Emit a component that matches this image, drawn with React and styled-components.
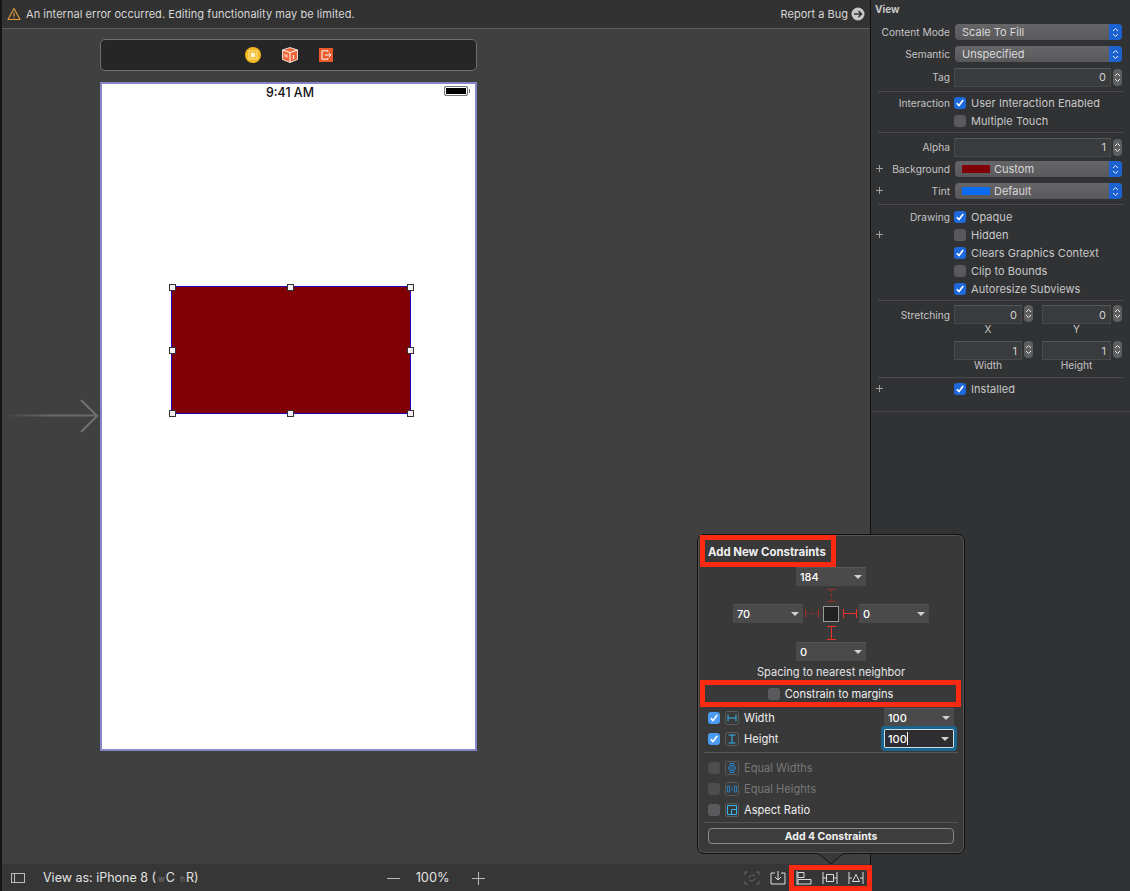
import React from "react";
import styled, { createGlobalStyle } from "styled-components";

const GlobalStyle = createGlobalStyle`
  html, body {
    margin: 0;
    width: 1130px;
    height: 891px;
    overflow: hidden;
    background: #404040;
    font-family: Inter, "Liberation Sans", sans-serif;
    font-size: 11px;
  }
  * { box-sizing: border-box; }
`;

const RED = "#fc2a12";

const Page = styled.div`
  position: relative;
  display: grid;
  grid-template-columns: 870px 260px;
  width: 1130px;
  height: 891px;
`;

/* ---------- left side ---------- */

const Main = styled.div`
  display: flex;
  flex-direction: column;
  height: 891px;
  border-left: 2px solid #151515;
`;

const Banner = styled.div`
  display: flex;
  align-items: center;
  flex: 0 0 29px;
  padding: 0 5px 1px 5px;
  background: #323232;
  border-bottom: 1px solid #5f5f5f;
  color: #d6d6d6;
`;

const BannerText = styled.span`
  margin-left: 5px;
  letter-spacing: 0.05px;
`;

const ReportBug = styled.span`
  display: flex;
  align-items: center;
  gap: 3px;
  margin-left: auto;
`;

const Canvas = styled.div`
  position: relative;
  flex: 1;
  display: flex;
  flex-direction: column;
  gap: 11px;
  padding: 10px 0 0 98px;
  background: #404040;
`;

const SceneDock = styled.div`
  display: flex;
  align-items: center;
  justify-content: center;
  gap: 21px;
  width: 377px;
  height: 32px;
  background: #262626;
  border: 1px solid #6e6e6e;
  border-radius: 5px;
`;

const Phone = styled.div`
  position: relative;
  width: 377px;
  height: 669px;
  background: #fff;
  border: 2px solid #8585c8;
`;

const StatusBar = styled.div`
  position: relative;
  display: flex;
  justify-content: center;
  padding: 1px 0 0 3px;
  color: #111;
  font-size: 12.4px;
  font-weight: 500;
  line-height: 16px;
`;

const Battery = styled.div`
  position: absolute;
  top: 2px;
  right: 7px;
  width: 24px;
  height: 10px;
  background: #000;
  border: 1px solid #777;
  border-radius: 2px;
  box-shadow: inset 0 0 0 1px #fff;

  &::after {
    content: "";
    position: absolute;
    right: -3px;
    top: 2px;
    width: 1px;
    height: 4px;
    background: #777;
  }
`;

const RedView = styled.div`
  position: absolute;
  left: 69px;
  top: 202px;
  width: 240px;
  height: 128px;
  background: #800005;
  border: 1px solid #2400c4;
`;

const Handle = styled.span`
  position: absolute;
  left: calc(${(p) => p.$x}% - 3.5px);
  top: calc(${(p) => p.$y}% - 3.5px);
  width: 7px;
  height: 7px;
  background: #f4eef4;
  border: 1px solid #333;
`;

const SegueArrow = styled.svg`
  position: absolute;
  left: 0;
  top: 370px;
`;

const BottomBar = styled.div`
  display: flex;
  align-items: center;
  flex: 0 0 27px;
  padding-left: 9px;
  background: #363636;
  color: #e2e2e2;
  font-size: 12.5px;
`;

const ViewAs = styled.span`
  margin-left: 18px;
  white-space: nowrap;
`;

const SizeClass = styled.span`
  color: #7d7d7d;
  font-size: 8px;
  margin: 0 1px 0 2px;
`;

const ZoomGroup = styled.div`
  display: flex;
  align-items: center;
  margin-left: 188px;
  gap: 16px;
`;

const ZoomLabel = styled.span`
  margin-right: 6px;
  font-size: 12.8px;
`;

const BarIcons = styled.div`
  display: flex;
  align-items: center;
  gap: 10px;
  margin-left: auto;
`;

const RedFrame = styled.div`
  display: flex;
  align-items: center;
  gap: 10px;
  position: relative;
  z-index: 3;
  height: 26px;
  margin: 1px -2px 0 -7px;
  padding: 0 3px 0 2px;
  border: 5px solid ${RED};
  background: #363636;
`;

/* ---------- inspector ---------- */

const Inspector = styled.aside`
  background: #313234;
  border-left: 1px solid #111;
  color: #d0d0d0;
`;

const Title = styled.div`
  height: 20px;
  padding: 3px 0 0 4px;
  color: #c8c8c8;
  font-size: 10px;
  font-weight: 700;
  line-height: 12px;
`;

const Section = styled.div`
  padding: ${(p) => p.$pad || "2px 0"};
  margin: 0 7px;
  border-bottom: 1px solid #4a4a4c;
  ${(p) => p.$flush && "margin: 0; padding-left: 7px; padding-right: 7px; border-bottom-color: #454547;"}
`;

const Row = styled.div`
  position: relative;
  display: flex;
  align-items: center;
  height: ${(p) => p.$h || 18}px;
  padding-left: 76px;
`;

const Label = styled.span`
  position: absolute;
  left: -7px;
  width: 79px;
  text-align: right;
  color: #c4c4c4;
  font-size: 10.2px;
  white-space: nowrap;
`;

const StretchLabel = styled(Label)`
  top: 4px;
`;

const Plus = styled.span`
  position: absolute;
  left: -2px;
  top: 50%;
  width: 7px;
  height: 7px;
  margin-top: -4px;
  background:
    linear-gradient(#a0a0a0, #a0a0a0) center / 7px 1px no-repeat,
    linear-gradient(#a0a0a0, #a0a0a0) center / 1px 7px no-repeat;
`;

const Select = styled.div`
  display: flex;
  align-items: center;
  width: 167px;
  height: 16px;
  margin-left: 1px;
  padding-left: 7px;
  background: linear-gradient(#666668, #59595b);
  border-radius: 4px;
  color: #d8d8d8;
  font-size: 11px;
  overflow: hidden;
`;

const Swatch = styled.span`
  width: 28px;
  height: 8px;
  margin-right: 4px;
  background: ${(p) => p.$color};
`;

const SelectArrows = styled.span`
  display: flex;
  align-items: center;
  justify-content: center;
  width: 13px;
  height: 16px;
  margin-left: auto;
  background: #1c62d0;
`;

const Field = styled.div`
  display: flex;
  align-items: center;
  justify-content: flex-end;
  width: ${(p) => p.$w}px;
  height: 19px;
  padding-right: 4px;
  background: #3a3b3d;
  border: 1px solid #48494b;
  border-top-color: #565759;
  color: #d0d0d0;
  font-size: 11px;
`;

const Stepper = styled.span`
  display: flex;
  align-items: center;
  justify-content: center;
  width: 9px;
  height: 17px;
  margin-left: 2px;
  background: #5e5f61;
  border-radius: 4px;
`;

const Check = styled.span`
  display: flex;
  align-items: center;
  justify-content: center;
  flex: none;
  width: 12px;
  height: 12px;
  border-radius: 3px;
  background: ${(p) => (p.$on ? p.$blue || "#1d69dc" : p.$bg || "#5a5a5c")};
`;

const CheckLabel = styled.span`
  margin-left: 5px;
  color: #c8c8c8;
  font-size: 11px;
  letter-spacing: 0.05px;
  white-space: nowrap;
`;

const StretchGrid = styled.div`
  position: relative;
  display: grid;
  grid-template-columns: 88px 80px;
  padding-left: 76px;
`;

const StretchCell = styled.div`
  display: grid;
  grid-template-columns: auto auto;
  grid-template-rows: 19px 10px;
  justify-content: start;
  height: 36px;
`;

const StretchCaption = styled.span`
  grid-column: 1;
  text-align: center;
  color: #c4c4c4;
  font-size: 10.2px;
  line-height: 10px;
`;

/* ---------- popover ---------- */

const Popover = styled.div`
  position: absolute;
  left: 697px;
  top: 534px;
  z-index: 2;
  display: flex;
  flex-direction: column;
  width: 268px;
  height: 320px;
  padding: 0 2px;
  background: #39393a;
  border: 1px solid #111;
  border-radius: 7px;
  box-shadow: inset 0 0 0 1px #555;
  color: #f0f0f0;
  font-size: 11.1px;
`;

const PopoverTail = styled.svg`
  position: absolute;
  left: 113px;
  bottom: -11px;
`;

const TitleFrame = styled.div`
  align-self: flex-start;
  width: 136px;
  height: 32px;
  padding-left: 3px;
  border: 5px solid ${RED};
  font-size: 11.4px;
  font-weight: 700;
  line-height: 24px;
  white-space: nowrap;
`;

const Diagram = styled.div`
  display: flex;
  flex-direction: column;
  align-items: center;
`;

const DropDown = styled.div`
  position: relative;
  display: flex;
  align-items: center;
  width: 70px;
  height: 19px;
  padding-left: 4px;
  background: #4a4a4b;
  border-top: 1px solid #555;
  color: #fff;
  font-size: 11px;
  font-weight: 500;

  &::after {
    content: "";
    position: absolute;
    right: 4px;
    top: 7px;
    border: 4px solid transparent;
    border-top: 4px solid #d0d0d0;
    border-bottom: 0;
  }
`;

const FocusDropDown = styled(DropDown)`
  background: #2e2e30;
  border: 1px solid #cfe0ea;
  outline: 3px solid #1b6690;
  border-radius: 1px;
  padding-left: 3px;
`;

const Caret = styled.span`
  display: inline-block;
  width: 1px;
  height: 13px;
  background: #fff;
`;

const MiddleRow = styled.div`
  display: flex;
  align-items: center;
  height: 19px;
`;

const CenterSquare = styled.div`
  width: 16px;
  height: 16px;
  margin: 0 2px;
  background: #212121;
  border: 1px solid #999;
`;

const SpacingNote = styled.div`
  margin-top: 5px;
  text-align: center;
  color: #e4e4e4;
  line-height: 13px;
`;

const MarginsFrame = styled.div`
  display: flex;
  align-items: center;
  justify-content: center;
  gap: 5px;
  width: 261px;
  height: 27px;
  margin-top: 1px;
  border: 5px solid ${RED};
`;

const OptionRow = styled.div`
  display: flex;
  align-items: center;
  height: 21px;
  padding-left: 8px;
  color: ${(p) => (p.$dim ? "#777" : "#f0f0f0")};
`;

const ConstraintIcon = styled.span`
  display: flex;
  margin: 0 5px;
`;

const OptionValue = styled.div`
  margin-left: auto;
  margin-right: 8px;
`;

const PopDivider = styled.div`
  height: 1px;
  margin: ${(p) => p.$m || "0"};
  background: #555;
`;

const AddButton = styled.button`
  display: block;
  width: 246px;
  height: 16px;
  margin: 5px 0 0 8px;
  padding: 0;
  background: #3d3d3e;
  border: 1px solid #8a8a8a;
  border-radius: 4px;
  color: #f2f2f2;
  font: 700 10.5px Inter, "Liberation Sans", sans-serif;
`;

/* ---------- small drawings ---------- */

const Updown = () => (
  <svg width="7" height="11" viewBox="0 0 7 11" fill="none" stroke="#e8e8e8" strokeWidth="1">
    <path d="M1 4l2.5-2.5L6 4M1 7l2.5 2.5L6 7" />
  </svg>
);

const Tick = () => (
  <svg width="10" height="10" viewBox="0 0 10 10" fill="none" stroke="#fff" strokeWidth="1.6">
    <path d="M1.8 5.2l2.2 2.4 4.2-5.6" />
  </svg>
);

const Box = ({ on, blue, bg }) => (
  <Check $on={on} $blue={blue} $bg={bg}>
    {on && <Tick />}
  </Check>
);

const CheckRow = ({ on, plus, label, children }) => (
  <Row>
    {plus && <Plus />}
    {label && <Label>{label}</Label>}
    <Box on={on} />
    <CheckLabel>{children}</CheckLabel>
  </Row>
);

const NumberField = ({ w = 157, value }) => (
  <>
    <Field $w={w}>{value}</Field>
    <Stepper>
      <Updown />
    </Stepper>
  </>
);

const Warning = () => (
  <svg width="14" height="14" viewBox="0 0 14 14" fill="none" stroke="#e5a13a" strokeWidth="1.1">
    <path d="M7 1.5L13 12.5H1z" strokeLinejoin="round" />
    <path d="M7 5.5v4M7 10.4v1" />
  </svg>
);

const ArrowCircle = () => (
  <svg width="14" height="14" viewBox="0 0 14 14">
    <circle cx="7" cy="7" r="6.5" fill="#c8c8c8" />
    <path d="M3 7h7M7.5 4l3 3-3 3" fill="none" stroke="#323232" strokeWidth="1.5" />
  </svg>
);

const ControllerIcon = () => (
  <svg width="16" height="16" viewBox="0 0 16 16">
    <circle cx="8" cy="8" r="8" fill="#f3b81f" />
    <rect x="4" y="4" width="8" height="8" fill="none" stroke="#fbe39a" strokeWidth="1" />
    <rect x="5.8" y="5.8" width="4.4" height="4.4" fill="#fff4cf" />
  </svg>
);

const CubeIcon = () => (
  <svg width="16" height="16" viewBox="0 0 16 16">
    <path d="M8 0.5l7.5 2.5v9.5L8 15.5 0.5 12.5V3z" fill="#f0683a" />
    <path d="M0.5 3L8 5.5 15.5 3M8 5.5v10" fill="none" stroke="#fff" strokeWidth="1" />
    <path d="M0.5 3L8 0.5 15.5 3v9.5L8 15.5 0.5 12.5z" fill="none" stroke="#fff" strokeWidth="0.8" />
    <path d="M3 7v3M5 7.5v3M11.5 8v4" stroke="#fff" strokeWidth="0.9" />
  </svg>
);

const ExitIcon = () => (
  <svg width="14" height="14" viewBox="0 0 14 14">
    <rect width="14" height="14" fill="#ea5a2a" />
    <path d="M9 4V2.8H3v8.4h6V10" fill="none" stroke="#fff" strokeWidth="1" />
    <path d="M6 7h6M10 5l2 2-2 2" fill="none" stroke="#fff" strokeWidth="1" />
  </svg>
);

const HStrut = ({ dashed, w = 18 }) => (
  <svg width={w} height="13" viewBox={`0 0 ${w} 13`} stroke={dashed ? "#96302a" : "#f0302a"} strokeWidth="1">
    <path d={`M2.5 2v9M${w - 2.5} 2v9`} />
    <path d={`M3 6.5H${w - 3}`} strokeDasharray={dashed ? "3 2" : undefined} />
  </svg>
);

const VStrut = ({ dashed, h = 18 }) => (
  <svg width="14" height={h} viewBox={`0 0 14 ${h}`} stroke={dashed ? "#96302a" : "#f0302a"} strokeWidth="1">
    <path d={`M3 3.5h9M3 ${h - 2.5}h9`} />
    <path d={`M7.5 3V${h - 3}`} strokeDasharray={dashed ? "3 2" : undefined} />
  </svg>
);

const IconFrame = ({ children, color = "#35b6f0" }) => (
  <svg width="14" height="14" viewBox="0 0 14 14" fill="none" stroke={color} strokeWidth="1">
    <rect x="0.5" y="0.5" width="13" height="13" rx="2" stroke="#5b5b5b" />
    {children}
  </svg>
);

const BarIcon = ({ children, color = "#dcdcdc", w = 16 }) => (
  <svg width={w} height="16" viewBox={`0 0 ${w} 16`} fill="none" stroke={color} strokeWidth="1">
    {children}
  </svg>
);

const handles = [
  [0, 0],
  [49.8, 0],
  [100, 0],
  [0, 50],
  [100, 50],
  [0, 100],
  [49.8, 100],
  [100, 100],
];

export default function App() {
  return (
    <Page>
      <GlobalStyle />
      <Main>
        <Banner>
          <Warning />
          <BannerText>An internal error occurred. Editing functionality may be limited.</BannerText>
          <ReportBug>
            Report a Bug
            <ArrowCircle />
          </ReportBug>
        </Banner>

        <Canvas>
          <SegueArrow width="98" height="34" viewBox="0 0 98 34" fill="none">
            <defs>
              <linearGradient id="segue" x1="0" x2="1" y1="0" y2="0">
                <stop offset="0" stopColor="#666" stopOpacity="0" />
                <stop offset="0.5" stopColor="#6a6a6a" />
              </linearGradient>
            </defs>
            <rect x="0" y="15.5" width="96" height="2" fill="url(#segue)" />
            <path d="M79 1l16 16-16 16" stroke="#707070" strokeWidth="2" />
          </SegueArrow>
          <SceneDock>
            <ControllerIcon />
            <CubeIcon />
            <ExitIcon />
          </SceneDock>
          <Phone>
            <StatusBar>
              9:41 AM
              <Battery />
            </StatusBar>
            <RedView>
              {handles.map(([x, y]) => (
                <Handle key={`${x}-${y}`} $x={x} $y={y} />
              ))}
            </RedView>
          </Phone>
        </Canvas>

        <BottomBar>
          <BarIcon w="14">
            <rect x="0.5" y="3.5" width="13" height="9" stroke="#bbb" />
            <path d="M3.5 3.5v9" stroke="#bbb" />
          </BarIcon>
          <ViewAs>
            View as: iPhone 8 (<SizeClass>w</SizeClass>C <SizeClass>h</SizeClass>R)
          </ViewAs>
          <ZoomGroup>
            <BarIcon w="13">
              <path d="M0 8.5h13" stroke="#bbb" />
            </BarIcon>
            <ZoomLabel>100%</ZoomLabel>
            <BarIcon w="13">
              <path d="M0 8.5h13M6.5 2v13" stroke="#bbb" />
            </BarIcon>
          </ZoomGroup>
          <BarIcons>
            <BarIcon color="#666">
              <path d="M1 5V2h3M12 2h3v3M15 11v3h-3M4 14H1v-3" />
              <path d="M11 6a3.5 3.5 0 0 0-6 2M5 10a3.5 3.5 0 0 0 6-2" />
            </BarIcon>
            <BarIcon>
              <path d="M5 3H1v11h14V3h-4" />
              <path d="M8 1v9M5 7l3 3 3-3" />
            </BarIcon>
            <RedFrame>
              <BarIcon>
                <path d="M1 1v14M2 2.5h6v5H2zM2 9.5h13v4.5H2z" />
              </BarIcon>
              <BarIcon>
                <path d="M1 2v12M15 2v12M1 8h3M12 8h3M4.5 4.5h7v7h-7z" />
              </BarIcon>
              <BarIcon>
                <path d="M1 2v12M15 2v12M1 8h3M12 8h3M8 4.5l3.5 7h-7z" />
              </BarIcon>
            </RedFrame>
          </BarIcons>
        </BottomBar>
      </Main>

      <Inspector>
        <Title>View</Title>
        <Section $pad="1px 0 2px">
          <Row $h={22}>
            <Label>Content Mode</Label>
            <Select>
              Scale To Fill
              <SelectArrows>
                <Updown />
              </SelectArrows>
            </Select>
          </Row>
          <Row $h={22}>
            <Label>Semantic</Label>
            <Select>
              Unspecified
              <SelectArrows>
                <Updown />
              </SelectArrows>
            </Select>
          </Row>
          <Row $h={24}>
            <Label>Tag</Label>
            <NumberField value="0" />
          </Row>
        </Section>
        <Section>
          <CheckRow on label="Interaction">
            User Interaction Enabled
          </CheckRow>
          <CheckRow>Multiple Touch</CheckRow>
        </Section>
        <Section $pad="3px 0 2px">
          <Row $h={22}>
            <Label>Alpha</Label>
            <NumberField value="1" />
          </Row>
          <Row $h={22}>
            <Plus />
            <Label>Background</Label>
            <Select>
              <Swatch $color="#800005" />
              Custom
              <SelectArrows>
                <Updown />
              </SelectArrows>
            </Select>
          </Row>
          <Row $h={22}>
            <Plus />
            <Label>Tint</Label>
            <Select>
              <Swatch $color="#0a6df0" />
              Default
              <SelectArrows>
                <Updown />
              </SelectArrows>
            </Select>
          </Row>
        </Section>
        <Section $pad="3px 0 2px">
          <CheckRow on label="Drawing">
            Opaque
          </CheckRow>
          <CheckRow plus>Hidden</CheckRow>
          <CheckRow on>Clears Graphics Context</CheckRow>
          <CheckRow>Clip to Bounds</CheckRow>
          <CheckRow on>Autoresize Subviews</CheckRow>
        </Section>
        <Section $pad="4px 0 0">
          <StretchGrid>
            <StretchLabel>Stretching</StretchLabel>
            <StretchCell>
              <NumberField w={68} value="0" />
              <StretchCaption>X</StretchCaption>
            </StretchCell>
            <StretchCell>
              <NumberField w={69} value="0" />
              <StretchCaption>Y</StretchCaption>
            </StretchCell>
            <StretchCell>
              <NumberField w={68} value="1" />
              <StretchCaption>Width</StretchCaption>
            </StretchCell>
            <StretchCell>
              <NumberField w={69} value="1" />
              <StretchCaption>Height</StretchCaption>
            </StretchCell>
          </StretchGrid>
        </Section>
        <Section $pad="2px 0 13px" $flush>
          <CheckRow on plus>
            Installed
          </CheckRow>
        </Section>
      </Inspector>

      <Popover>
        <TitleFrame>Add New Constraints</TitleFrame>
        <Diagram>
          <DropDown>184</DropDown>
          <VStrut dashed />
          <MiddleRow>
            <DropDown>70</DropDown>
            <HStrut dashed />
            <CenterSquare />
            <HStrut />
            <DropDown>0</DropDown>
          </MiddleRow>
          <VStrut h={19} />
          <DropDown>0</DropDown>
        </Diagram>
        <SpacingNote>Spacing to nearest neighbor</SpacingNote>
        <MarginsFrame>
          <Box />
          Constrain to margins
        </MarginsFrame>
        <OptionRow>
          <Box on blue="#4a9bf2" />
          <ConstraintIcon>
            <IconFrame>
              <path d="M3 3.5v7M11 3.5v7M3 7h8" />
            </IconFrame>
          </ConstraintIcon>
          Width
          <OptionValue>
            <DropDown>100</DropDown>
          </OptionValue>
        </OptionRow>
        <OptionRow>
          <Box on blue="#4a9bf2" />
          <ConstraintIcon>
            <IconFrame>
              <path d="M3.5 3h7M3.5 11h7M7 3v8" />
            </IconFrame>
          </ConstraintIcon>
          Height
          <OptionValue>
            <FocusDropDown>
              100
              <Caret />
            </FocusDropDown>
          </OptionValue>
        </OptionRow>
        <PopDivider $m="3px 4px 4px" />
        <OptionRow $dim>
          <Box bg="#4d4d4e" />
          <ConstraintIcon>
            <IconFrame color="#2a7fc0">
              <path d="M5 2.5h4v2H5zM3.5 6h7v2h-7zM5 9.5h4v2H5z" />
            </IconFrame>
          </ConstraintIcon>
          Equal Widths
        </OptionRow>
        <OptionRow $dim>
          <Box bg="#4d4d4e" />
          <ConstraintIcon>
            <IconFrame color="#2a7fc0">
              <path d="M2.5 4h2v6h-2zM9.5 4h2v6h-2zM6 6h2M6 8h2" />
            </IconFrame>
          </ConstraintIcon>
          Equal Heights
        </OptionRow>
        <OptionRow>
          <Box bg="#5a5a5c" />
          <ConstraintIcon>
            <IconFrame>
              <path d="M2.5 2.5h9v9h-9zM6.5 11.5v-5h5" />
            </IconFrame>
          </ConstraintIcon>
          Aspect Ratio
        </OptionRow>
        <PopDivider $m="2px 4px 0" />
        <AddButton>Add 4 Constraints</AddButton>
        <PopoverTail width="40" height="11" viewBox="0 0 40 11">
          <path d="M0 0c8 0 10 2 14 6l6 5 6-5c4-4 6-6 14-6z" fill="#39393a" />
          <path d="M0 0c8 0 10 2 14 6l6 5 6-5c4-4 6-6 14-6" fill="none" stroke="#111" />
        </PopoverTail>
      </Popover>
    </Page>
  );
}
